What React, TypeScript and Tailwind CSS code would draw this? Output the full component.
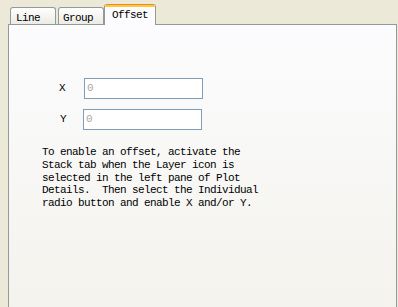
import React from "react";

const mono = { fontFamily: '"Liberation Mono", "DejaVu Sans Mono", monospace' };

function Tab({ label, width, pl, selected, ml }: { label: string; width: number; pl: number; selected?: boolean; ml?: number }) {
  if (selected) {
    return (
      <div
        className="relative z-10 h-[21px] -mb-[1px] flex flex-col border-l border-r border-[#919b9c] bg-[#fcfcfe] rounded-t-[3px] overflow-hidden"
        style={{ width, marginLeft: ml ?? 0 }}
      >
        <div className="h-[1px] bg-[#e68b2c]" />
        <div className="h-[2px] bg-[#ffc73c]" />
        <div className="text-[11px] tracking-[-0.6px] leading-[13px] text-black pt-[2px]" style={{ paddingLeft: pl }}>
          {label}
        </div>
      </div>
    );
  }
  return (
    <div
      className="h-[17px] border-t border-l border-r border-[#919b9c] rounded-t-[3px] bg-gradient-to-b from-[#ffffff] to-[#ecebe5] text-[11px] tracking-[-0.6px] leading-[13px] text-black pt-[4px]"
      style={{ width, paddingLeft: pl, marginLeft: ml ?? 0 }}
    >
      {label}
    </div>
  );
}

export default function App() {
  return (
    <div className="w-[398px] h-[307px] bg-[#ece9d8] overflow-hidden" style={mono}>
      <div className="flex items-end h-[24px] pl-[10px]">
        <Tab label="Line" width={46} pl={5} />
        <Tab label="Group" width={46} pl={4} ml={2} />
        <Tab label="Offset" width={52} pl={7} selected />
      </div>
      <div className="ml-[8px] w-[389px] h-[300px] border-t border-l border-r border-[#919b9c] bg-gradient-to-b from-[#fcfcfe] to-[#f3f2ec]">
        <div className="pt-[53px]">
          <div className="flex items-center h-[21px]">
            <span className="ml-[50px] w-[25px] text-[11px] tracking-[-0.6px] text-black">X</span>
            <div className="w-[119px] h-[21px] border border-[#7f9db9] bg-white text-[11px] tracking-[-0.6px] text-[#aca899] leading-[19px] pl-[2px]">0</div>
          </div>
          <div className="flex items-center h-[21px] mt-[10px]">
            <span className="ml-[51px] w-[23px] text-[11px] tracking-[-0.6px] text-black">Y</span>
            <div className="w-[119px] h-[21px] border border-[#7f9db9] bg-white text-[11px] tracking-[-0.6px] text-[#aca899] leading-[19px] pl-[2px]">0</div>
          </div>
          <p className="mt-[16px] ml-[33px] text-[11px] tracking-[-0.6px] leading-[12.8px] text-black whitespace-pre">
            {"To enable an offset, activate the\nStack tab when the Layer icon is\nselected in the left pane of Plot\nDetails.  Then select the Individual\nradio button and enable X and/or Y."}
          </p>
        </div>
      </div>
    </div>
  );
}
